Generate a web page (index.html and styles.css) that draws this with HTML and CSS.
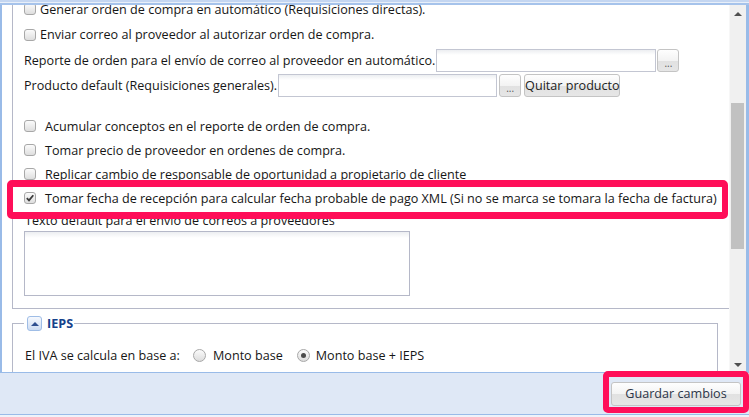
FILE: index.html
```html
<!DOCTYPE html>
<html lang="es">
<head>
  <meta charset="UTF-8">
  <title>Configuración</title>
  <link rel="stylesheet" href="styles.css">
</head>
<body>
<div class="window">
  <div class="topbar"></div>
  <div class="pane">
    <div class="content">
      <div class="content-inner">
        <div class="group">
          <div class="row row-1">
            <span class="cb"></span><span class="lbl lbl-tight">Generar orden de compra en automático (Requisiciones directas).</span>
          </div>
          <div class="row row-2">
            <span class="cb"></span><span class="lbl lbl-tight">Enviar correo al proveedor al autorizar orden de compra.</span>
          </div>
          <div class="row row-field">
            <span class="lbl">Reporte de orden para el envío de correo al proveedor en automático.</span>
            <input class="txt txt-reporte" type="text">
            <button class="btn btn-dots">...</button>
          </div>
          <div class="row row-field">
            <span class="lbl">Producto default (Requisiciones generales).</span>
            <input class="txt txt-producto" type="text">
            <button class="btn btn-dots">...</button>
            <button class="btn btn-quitar">Quitar producto</button>
          </div>
          <div class="spacer"></div>
          <div class="row row-check">
            <span class="cb"></span><span class="lbl">Acumular conceptos en el reporte de orden de compra.</span>
          </div>
          <div class="row row-check">
            <span class="cb"></span><span class="lbl">Tomar precio de proveedor en ordenes de compra.</span>
          </div>
          <div class="row row-check">
            <span class="cb"></span><span class="lbl">Replicar cambio de responsable de oportunidad a propietario de cliente</span>
          </div>
          <div class="row row-check">
            <span class="cb checked">
              <svg width="10" height="10" viewBox="0 0 10 10"><path d="M1.8 5.2 L4 7.4 L8.3 2.2" fill="none" stroke="#3c3c3c" stroke-width="1.8"/></svg>
            </span><span class="lbl">Tomar fecha de recepción para calcular fecha probable de pago XML (Si no se marca se tomara la fecha de factura)</span>
          </div>
          <div class="area-label">Texto default para el envío de correos a proveedores</div>
          <textarea class="area"></textarea>
        </div>

        <fieldset class="ieps">
          <legend><span class="toggle"><span class="tri-up"></span></span><span class="legend-text">IEPS</span></legend>
          <div class="row radio-row">
            <span class="radio-title">El IVA se calcula en base a:</span>
            <span class="rb"></span><span class="lbl">Monto base</span>
            <span class="rb checked"></span><span class="lbl">Monto base + IEPS</span>
          </div>
        </fieldset>
      </div>
    </div>
    <div class="scrollbar">
      <div class="arrow arrow-up"></div>
      <div class="track"><div class="thumb"></div></div>
      <div class="arrow arrow-down"></div>
    </div>
  </div>
  <div class="footer">
    <button class="btn btn-save">Guardar cambios</button>
  </div>

  <!-- highlight marks drawn over the form -->
  <div class="mark mark-row"></div>
  <div class="mark mark-save"></div>
</div>
</body>
</html>
```

FILE: styles.css
```css
body {
  margin: 0;
  background: #fff;
  font-family: "Open Sans", "Noto Sans", sans-serif;
  font-size: 12.6px;
  color: #161616;
}

.window {
  position: relative;
  width: 749px;
  height: 417px;
  overflow: hidden;
  background: #eef3fa;
}

.topbar {
  height: 5px;
  background: linear-gradient(#c4d6f1 0, #c4d6f1 2px, #e8eff9 2px, #e8eff9 3px, #a6c3eb 3px, #a6c3eb 5px);
}

.pane {
  display: flex;
  box-sizing: border-box;
  height: 367px;
  border-left: 2px solid #99bbe8;
  border-right: 3px solid #99bbe8;
  background: #fff;
}

.content {
  flex: 1;
  overflow: hidden;
  padding-left: 10px;
}

.content-inner {
  margin-top: -9px;
}

/* first group, its top is scrolled out of view */
.group {
  border: 1px solid #b5b8c8;
  border-top: none;
  margin-right: -1px;
  padding: 0 0 12px 11px;
}

.row {
  display: flex;
  align-items: center;
  white-space: nowrap;
}

.row-1 { height: 25px; }
.row-2 { height: 27px; }
.row-field { height: 25px; }
.row-check { height: 24px; }

.spacer {
  height: 16px;
}

.cb {
  box-sizing: border-box;
  width: 12px;
  height: 12px;
  border: 1px solid #a8a8a8;
  border-radius: 3px;
  background: linear-gradient(#fbfbfb, #dedede);
  display: flex;
  align-items: center;
  justify-content: center;
  margin-right: 9px;
  flex-shrink: 0;
}

.row-1 .lbl {
  position: relative;
  top: 1px;
}

.lbl-tight {
  margin-left: -5px;
}

.row-field .lbl {
  margin-left: 0;
  margin-right: 1px;
}

.txt {
  box-sizing: border-box;
  height: 23px;
  border: 1px solid #c3c6d2;
  background: linear-gradient(#eceef1, #fff 5px);
  margin: 0;
  padding: 0 3px;
  font: inherit;
}

.txt-reporte { width: 220px; }
.txt-producto { width: 219px; }

.btn {
  box-sizing: border-box;
  height: 23px;
  border: 1px solid #c4c4c4;
  border-radius: 3px;
  background: linear-gradient(#fefefe 0%, #f3f3f3 50%, #e1e1e1 51%, #e6e6e6 100%);
  font-family: "Open Sans", "Noto Sans", sans-serif;
  font-size: 12.6px;
  color: #222;
  padding: 0;
  margin: 0;
}

.btn-dots {
  width: 22px;
  margin-left: 1px;
  line-height: 26px;
  font-size: 10px;
  color: #555;
}

.txt-producto + .btn-dots {
  margin-left: 2px;
}

.btn-quitar {
  width: 96px;
  margin-left: 3px;
  line-height: 18px;
}

.area-label {
  height: 21px;
  line-height: 21px;
  margin-left: 1px;
}

.area {
  display: block;
  box-sizing: border-box;
  width: 386px;
  height: 65px;
  margin: 0;
  border: 1px solid #b5b8c8;
  background: linear-gradient(#eceef1, #fff 6px);
  resize: none;
}

.ieps {
  margin: 7px 11px 0 0;
  border: 1px solid #b5b8c8;
  padding: 12px 0 20px 11px;
}

.ieps legend {
  display: flex;
  align-items: center;
  padding: 0 1px 0 3px;
  height: 15px;
}

.toggle {
  box-sizing: border-box;
  width: 15px;
  height: 15px;
  border: 1px solid #9fbde6;
  border-radius: 3px;
  background: linear-gradient(#f6f9fe, #cddcf2);
  display: flex;
  align-items: center;
  justify-content: center;
}

.tri-up {
  width: 0;
  height: 0;
  border-left: 4px solid transparent;
  border-right: 4px solid transparent;
  border-bottom: 4px solid #2f4f8f;
}

.legend-text {
  margin-left: 5px;
  font-weight: 700;
  color: #15428b;
  font-size: 12.6px;
}

.radio-row {
  height: 24px;
}

.radio-title {
  width: 168px;
  margin-left: 1px;
}

.rb {
  box-sizing: border-box;
  width: 13px;
  height: 13px;
  border: 1px solid #a8a8a8;
  border-radius: 50%;
  background: linear-gradient(#fbfbfb, #dcdcdc);
  margin-right: 7px;
  display: flex;
  align-items: center;
  justify-content: center;
}

.rb.checked::after {
  content: "";
  width: 5px;
  height: 5px;
  border-radius: 50%;
  background: #4a4a4a;
}

.rb + .lbl {
  margin-right: 14px;
}

.rb.checked {
  margin-right: 6px;
}

.scrollbar {
  width: 17px;
  background: #f0f0f0;
  display: flex;
  flex-direction: column;
  border-left: 1px solid #f7f7f7;
  box-sizing: border-box;
}

.arrow {
  height: 17px;
  display: flex;
  align-items: center;
  justify-content: center;
}

.arrow-up::after {
  content: "";
  margin-top: 1px;
  border-left: 4px solid transparent;
  border-right: 4px solid transparent;
  border-bottom: 4px solid #505050;
}

.arrow-down::after {
  content: "";
  margin-top: 2px;
  border-left: 4px solid transparent;
  border-right: 4px solid transparent;
  border-top: 4px solid #505050;
}

.track {
  flex: 1;
}

.thumb {
  width: 13px;
  margin: 81px 0 0 1px;
  height: 146px;
  background: #c1c1c1;
}

.footer {
  box-sizing: border-box;
  height: 43px;
  border-top: 1px solid #99bbe8;
  border-bottom: 1px solid #99bbe8;
  background: #dfe8f6;
  display: flex;
  align-items: center;
  justify-content: flex-end;
  padding-right: 8px;
}

.btn-save {
  width: 130px;
  height: 24px;
  font-size: 12.6px;
  color: #2c3548;
}

.mark {
  position: absolute;
  box-sizing: border-box;
  border: 6px solid #ff0e59;
  border-radius: 5px;
}

.mark-row {
  left: 7px;
  top: 180px;
  width: 721px;
  height: 39px;
  border-width: 7px 6px;
}

.mark-save {
  left: 603px;
  top: 371px;
  width: 146px;
  height: 42px;
}
```
